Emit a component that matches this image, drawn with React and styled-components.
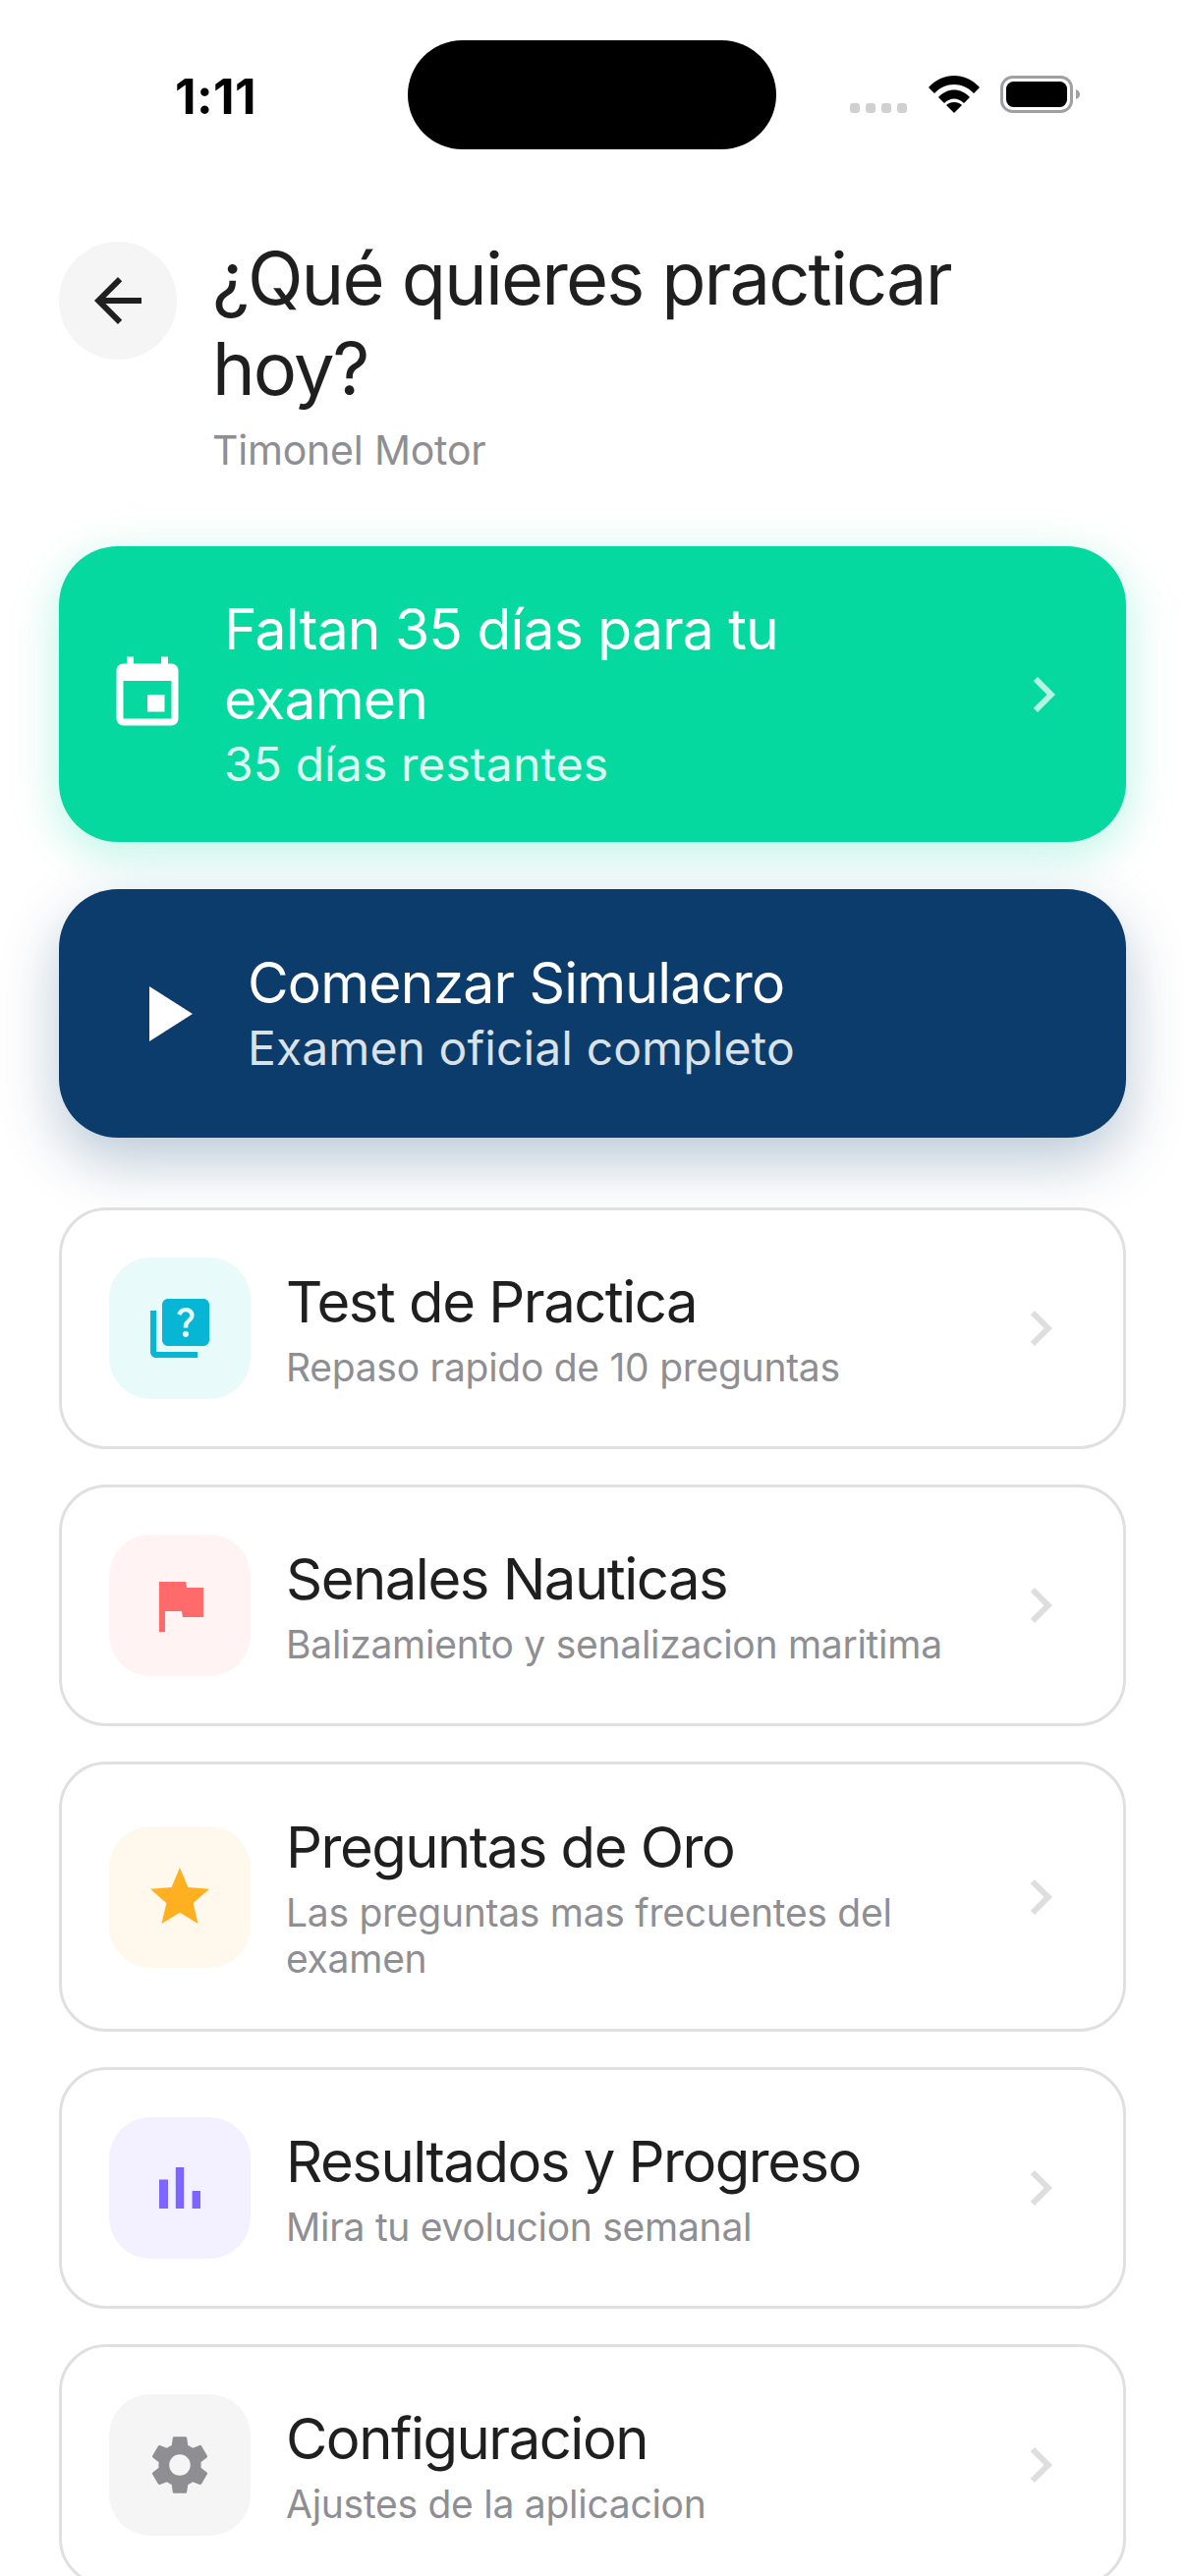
import React from 'react';
import styled, { createGlobalStyle } from 'styled-components';
import { MdArrowBack, MdEvent, MdChevronRight, MdPlayArrow, MdQuiz, MdFlag, MdStar, MdSettings } from 'react-icons/md';

const Global = createGlobalStyle`
  html, body { margin: 0; padding: 0; background: #fff; }
  body { font-family: Inter, "Liberation Sans", sans-serif; -webkit-font-smoothing: antialiased; }
`;
const Page = styled.div`
  width: 1206px; height: 2622px; overflow: hidden; background: #fff; box-sizing: border-box;
`;
const StatusBar = styled.div`
  display: grid; grid-template-columns: 415px 375px 1fr; height: 111px; padding-top: 41px; align-items: center;
`;
const Time = styled.div`
  padding-left: 178px; font-size: 50px; font-weight: 700; color: #000; letter-spacing: 0.4px; position: relative; top: 1px;
`;
const Island = styled.div`
  height: 111px; background: #000; border-radius: 56px;
`;
const StatusIcons = styled.div`
  display: flex; align-items: flex-end; padding-left: 75px; height: 38px; margin-top: -1px;
`;
const Dots = styled.div`
  display: flex; gap: 6px; margin-right: 22px;
  i { width: 10px; height: 10px; border-radius: 3px; background: #d0d0d0; display: block; }
`;
const Header = styled.header`
  display: flex; gap: 36px; padding: 85px 60px 0; align-items: flex-start;
`;
const BackButton = styled.div`
  width: 120px; height: 120px; border-radius: 50%; background: #f5f5f5; display: flex; align-items: center; justify-content: center; flex: none; margin-top: 9px; color: #1f1f1f;
`;
const HeaderText = styled.div`
  display: flex; flex-direction: column; padding-right: 100px;
`;
const Title = styled.h1`
  margin: 0; font-size: 74px; line-height: 92px; font-weight: 400; color: #1f1f1f; letter-spacing: -1.9px;
`;
const Subtitle = styled.div`
  margin-top: 14px; font-size: 41px; line-height: 47px; color: #8e8e93; letter-spacing: -0.2px;
`;
const Content = styled.main`
  display: flex; flex-direction: column; padding: 74px 60px 0;
`;
const Banner = styled.div`
  display: flex; align-items: center; border-radius: 60px; color: #fff; box-sizing: border-box;
  background: ${p => p.$bg}; box-shadow: ${p => p.$shadow};
  height: ${p => p.$h}px; padding: ${p => p.$pad}; gap: 36px; margin-bottom: ${p => p.$mb}px;
  svg { flex: none; }
`;
const BannerText = styled.div`
  flex: 1; min-width: 0; padding-right: ${p => p.$pr || 0}px;
`;
const BannerTitle = styled.div`
  font-size: 57px; line-height: 71px; letter-spacing: -0.8px;
`;
const BannerSub = styled.div`
  font-size: 48px; line-height: 62px; letter-spacing: 0.1px; opacity: .85;
`;
const FaintChevron = styled(MdChevronRight)`
  opacity: .7;
`;
const List = styled.div`
  display: flex; flex-direction: column; gap: 36px;
`;
const Row = styled.div`
  display: flex; align-items: center; gap: 36px; padding: 48px; border: 3px solid #e0e0e0; border-radius: 48px; background: #fff; flex: none;
`;
const IconBox = styled.div`
  width: 144px; height: 144px; border-radius: 42px; flex: none; display: flex; align-items: center; justify-content: center;
  background: ${p => p.$bg}; color: ${p => p.$fg};
`;
const RowText = styled.div`
  flex: 1; min-width: 0;
`;
const RowTitle = styled.div`
  font-size: 58px; line-height: 72px; color: #1f1f1f; letter-spacing: -1.5px;
`;
const RowSub = styled.div`
  margin-top: 7px; font-size: 39px; line-height: 47px; color: #8e8e93; letter-spacing: -0.27px;
`;
const RowChevron = styled(MdChevronRight)`
  color: #dedede; flex: none;
`;

const Bars = ({ size }) => (
  <svg width={size} height={size} viewBox="0 0 24 24" fill="currentColor">
    <path d="M5 9.2h3V19H5zM10.6 5h2.8v14h-2.8zm5.6 8H19v6h-2.8z" />
  </svg>
);

const rows = [
  { t: 'Test de Practica', s: 'Repaso rapido de 10 preguntas', I: MdQuiz, bg: '#e8fafa', fg: '#06b6d4' },
  { t: 'Senales Nauticas', s: 'Balizamiento y senalizacion maritima', I: MdFlag, bg: '#fff3f3', fg: '#ff6b6b' },
  { t: 'Preguntas de Oro', s: 'Las preguntas mas frecuentes del examen', I: MdStar, bg: '#fff8ec', fg: '#ffb020' },
  { t: 'Resultados y Progreso', s: 'Mira tu evolucion semanal', I: Bars, bg: '#f3f1ff', fg: '#7c66ff' },
  { t: 'Configuracion', s: 'Ajustes de la aplicacion', I: MdSettings, bg: '#f5f5f5', fg: '#8e8e93' },
];

const Wifi = () => (
  <svg width="52" height="38" viewBox="0 0 52 38" fill="#000" style={{ marginRight: 21 }}>
    <path d="M0 12 C14 -4 38 -4 52 12 L46 18 C35 6 17 6 6 18 Z" />
    <path d="M10 22 C19 12 33 12 42 22 L36 28 C30 22 22 22 16 28 Z" />
    <path d="M18 30 C22 26 30 26 34 30 L26 38 Z" />
  </svg>
);
const Battery = () => (
  <svg width="82" height="38" viewBox="0 0 82 38">
    <rect x="1.5" y="1.5" width="71" height="35" rx="11" fill="none" stroke="#a0a0a4" strokeWidth="3" />
    <rect x="6" y="6" width="62" height="26" rx="7.5" fill="#000" />
    <path d="M77 14 C80 15 81 17 81 19 C81 21 80 23 77 24 Z" fill="#a0a0a4" />
  </svg>
);

export default function App() {
  return (
    <Page>
      <Global />
      <StatusBar>
        <Time>1:11</Time>
        <Island />
        <StatusIcons>
          <Dots><i /><i /><i /><i /></Dots>
          <Wifi />
          <Battery />
        </StatusIcons>
      </StatusBar>
      <Header>
        <BackButton><MdArrowBack size={72} /></BackButton>
        <HeaderText>
          <Title>¿Qué quieres practicar hoy?</Title>
          <Subtitle>Timonel Motor</Subtitle>
        </HeaderText>
      </Header>
      <Content>
        <Banner $bg="#06d9a0" $shadow="0 12px 48px rgba(6,217,160,.28)" $h={301} $pad="0 48px" $mb={48}>
          <MdEvent size={84} />
          <BannerText $pr={190}>
            <BannerTitle>Faltan 35 días para tu examen</BannerTitle>
            <BannerSub>35 días restantes</BannerSub>
          </BannerText>
          <FaintChevron size={72} />
        </Banner>
        <Banner $bg="#0b3c6b" $shadow="0 24px 60px rgba(11,60,107,.28)" $h={253} $pad="0 60px" $mb={71}>
          <MdPlayArrow size={96} />
          <BannerText>
            <BannerTitle>Comenzar Simulacro</BannerTitle>
            <BannerSub>Examen oficial completo</BannerSub>
          </BannerText>
        </Banner>
        <List>
          {rows.map(({ t, s, I, bg, fg }) => (
            <Row key={t}>
              <IconBox $bg={bg} $fg={fg}><I size={72} /></IconBox>
              <RowText>
                <RowTitle>{t}</RowTitle>
                <RowSub>{s}</RowSub>
              </RowText>
              <RowChevron size={72} />
            </Row>
          ))}
        </List>
      </Content>
    </Page>
  );
}
